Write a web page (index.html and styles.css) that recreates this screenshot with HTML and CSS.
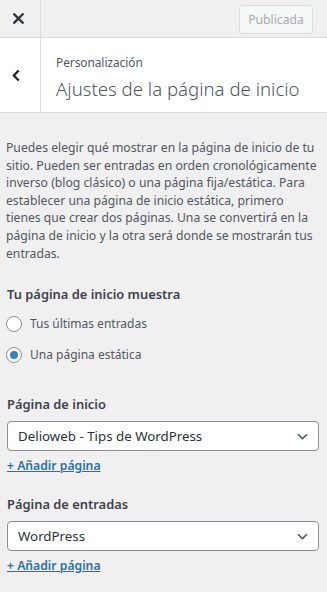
FILE: index.html
```html
<!DOCTYPE html>
<html lang="es">
<head>
<meta charset="utf-8">
<link rel="stylesheet" href="styles.css">
</head>
<body>
<div class="topbar">
  <div class="close">
    <svg width="11" height="11" viewBox="0 0 11 11"><path d="M1.3 1.3L9.7 9.7M9.7 1.3L1.3 9.7" stroke="#2c3338" stroke-width="2.3" stroke-linecap="square"/></svg>
  </div>
  <div class="spacer"></div>
  <button class="publish" disabled>Publicada</button>
</div>
<div class="header">
  <div class="back">
    <svg width="8" height="11" viewBox="0 0 8 11"><path d="M6 1.2L1.8 5.5L6 9.8" fill="none" stroke="#1d2327" stroke-width="2.2" stroke-linecap="square" stroke-linejoin="miter"/></svg>
  </div>
  <div class="titles">
    <div class="crumb">Personalización</div>
    <div class="title">Ajustes de la página de inicio</div>
  </div>
</div>
<div class="content">
  <p class="desc">Puedes elegir qué mostrar en la página de inicio de tu sitio. Pueden ser entradas en orden cronológicamente inverso (blog clásico) o una página fija/estática. Para establecer una página de inicio estática, primero tienes que crear dos páginas. Una se convertirá en la página de inicio y la otra será donde se mostrarán tus entradas.</p>
  <div class="group">
    <div class="label">Tu página de inicio muestra</div>
    <label class="radio"><span class="circle"></span>Tus últimas entradas</label>
    <label class="radio"><span class="circle checked"></span>Una página estática</label>
  </div>
  <div class="field">
    <div class="label">Página de inicio</div>
    <div class="select"><span>Delioweb - Tips de WordPress</span><svg width="11" height="7" viewBox="0 0 11 7"><path d="M1 1.2L5.5 5.6L10 1.2" fill="none" stroke="#50575e" stroke-width="1.6"/></svg></div>
    <a class="add" href="#">+ Añadir página</a>
  </div>
  <div class="field second">
    <div class="label">Página de entradas</div>
    <div class="select"><span>WordPress</span><svg width="11" height="7" viewBox="0 0 11 7"><path d="M1 1.2L5.5 5.6L10 1.2" fill="none" stroke="#50575e" stroke-width="1.6"/></svg></div>
    <a class="add" href="#">+ Añadir página</a>
  </div>
</div>
</body>
</html>
```
FILE: styles.css
```css
* { box-sizing: border-box; }
html, body { margin: 0; padding: 0; }
body {
  width: 327px;
  height: 592px;
  overflow: hidden;
  background: #f0f0f1;
  font-family: "Noto Sans", "Open Sans", sans-serif;
  color: #50575e;
}
.topbar {
  display: flex;
  align-items: center;
  height: 38px;
  border-bottom: 1px solid #dcdcde;
}
.close {
  width: 41px;
  height: 37px;
  border-right: 1px solid #dcdcde;
  display: flex;
  align-items: center;
  justify-content: center;
  padding-right: 4px;
}
.spacer { flex: 1; }
.publish {
  margin-right: 14px;
  margin-top: 1px;
  width: 74px;
  height: 29px;
  background: #f6f7f7;
  border: 1px solid #dcdcde;
  border-radius: 3px;
  color: #a7aaad;
  font-family: inherit;
  font-size: 12.2px;
  padding: 0;
}
.header {
  display: flex;
  height: 75px;
  background: #fff;
  border-bottom: 1px solid #dcdcde;
}
.back {
  width: 41px;
  border-right: 1px solid #dcdcde;
  display: flex;
  align-items: center;
  justify-content: center;
  padding-right: 9px;
  padding-top: 1px;
}
.titles {
  padding: 15px 0 0 15px;
}
.crumb {
  font-size: 11.8px;
  line-height: 18px;
  color: #50575e;
}
.title {
  font-size: 18.6px;
  font-weight: 300;
  line-height: 26px;
  margin-top: 5px;
  color: #50575e;
}
.content {
  padding: 0 8px 0 6px;
}
.desc {
  margin: 26px 0 0;
  font-size: 12.2px;
  line-height: 17.6px;
}
.group { margin-top: 22px; }
.label {
  font-size: 12.9px;
  font-weight: 600;
  line-height: 20px;
  color: #3c434a;
  margin-left: 1px;
}
.radio {
  display: flex;
  align-items: center;
  font-size: 12px;
  height: 31px;
  color: #50575e;
}
.label + .radio { margin-top: 4px; }
.circle {
  width: 16px;
  height: 16px;
  border-radius: 50%;
  border: 1px solid #8c8f94;
  background: #fff;
  margin-right: 8px;
  position: relative;
}
.circle.checked::after {
  content: "";
  position: absolute;
  left: 3px;
  top: 3px;
  width: 8px;
  height: 8px;
  border-radius: 50%;
  background: #3582c4;
}
.field { margin-top: 24px; }
.field.second { margin-top: 18px; }
.select {
  margin: 7px 0 0 1px;
  height: 30px;
  background: #fff;
  border: 1px solid #8c8f94;
  border-radius: 4px;
  display: flex;
  align-items: center;
  justify-content: space-between;
  padding: 0 10px 0 10px;
  font-size: 13.3px;
  color: #2c3338;
}
.add {
  display: inline-block;
  margin: 5px 0 0 1px;
  font-size: 12.2px;
  font-weight: 600;
  color: #2271b1;
  text-decoration: underline;
  line-height: 20px;
}
```
